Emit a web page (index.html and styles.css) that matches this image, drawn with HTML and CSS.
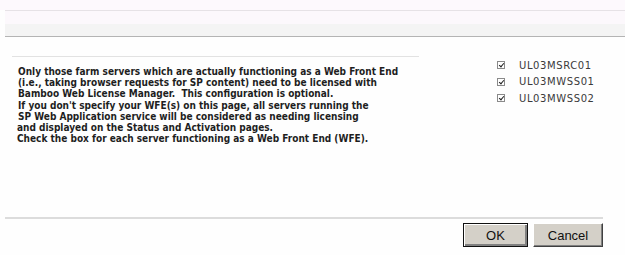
FILE: index.html
```html
<!DOCTYPE html>
<html lang="en">
<head>
    <meta charset="UTF-8">
    <title>Web Front End Servers</title>
    <link rel="stylesheet" href="styles.css">
</head>
<body>
    <div class="top-strip"></div>
    <div class="page">
        <div class="title-band">
            <div class="title-light"></div>
            <div class="title-gray"></div>
        </div>

        <div class="content">
            <div class="description">
                <p>Only those farm servers which are actually functioning as a Web Front End</p>
                <p>(i.e., taking browser requests for SP content) need to be licensed with</p>
                <p>Bamboo Web License Manager.&nbsp; This configuration is optional.</p>
                <p>If you don't specify your WFE(s) on this page, all servers running the</p>
                <p>SP Web Application service will be considered as needing licensing</p>
                <p class="shift">and displayed on the Status and Activation pages.</p>
                <p class="shift">Check the box for each server functioning as a Web Front End (WFE).</p>
            </div>

            <ul class="server-list">
                <li><span class="check"></span>UL03MSRC01</li>
                <li><span class="check"></span>UL03MWSS01</li>
                <li><span class="check"></span>UL03MWSS02</li>
            </ul>
        </div>

        <div class="footer">
            <button class="btn btn-default">OK</button>
            <button class="btn">Cancel</button>
        </div>
    </div>
</body>
</html>
```

FILE: styles.css
```css
* {
    margin: 0;
    padding: 0;
    box-sizing: border-box;
}

body {
    background: #fefefe;
    font-family: "DejaVu Sans", Verdana, sans-serif;
    color: #1e1e1e;
}

.top-strip {
    height: 10px;
    background: #fdf9fd;
}

.page {
    margin-left: 5px;
}

.title-band {
    border-top: 1px solid #e6e2e6;
    border-bottom: 1px solid #b4b4b4;
}

.title-light {
    height: 13px;
    background: #fcf8fc;
}

.title-gray {
    height: 12px;
    background: #f4f4f4;
}

.content {
    display: flex;
    padding-top: 19px;
    height: 181px;
}

.description {
    width: 407px;
    margin-left: 7px;
    border-top: 1px solid #e2e2e2;
    padding-top: 9px;
    padding-left: 6px;
    font-family: "DejaVu Sans Condensed", "DejaVu Sans", sans-serif;
    font-size: 10px;
    font-weight: bold;
    line-height: 11.2px;
    white-space: nowrap;
}

.description .shift {
    margin-left: -1px;
}

.server-list {
    list-style: none;
    margin-left: 78px;
    padding-top: 1px;
    font-size: 10px;
    letter-spacing: 0.6px;
    color: #3a3a3a;
}

.server-list li {
    display: flex;
    align-items: center;
    height: 16.5px;
}

.check {
    width: 8px;
    height: 8px;
    margin-right: 14px;
    border: 1px solid #8a8a8a;
    background: #fff;
    position: relative;
}

.check::after {
    content: "";
    position: absolute;
    left: 2px;
    top: 0px;
    width: 2px;
    height: 4px;
    border-right: 1px solid #222;
    border-bottom: 1px solid #222;
    transform: rotate(40deg);
}

.footer {
    display: flex;
    justify-content: flex-end;
    gap: 5px;
    width: 598px;
    border-top: 2px solid #dcdcdc;
    padding-top: 4px;
    margin-top: -1px;
}

.btn {
    height: 24px;
    background: #d4d0c8;
    font-family: "Liberation Sans", Arial, sans-serif;
    font-size: 13px;
    color: #111;
    border: 1px solid;
    border-color: #fff #404040 #404040 #fff;
    box-shadow: inset -1px -1px 0 #808080;
    width: 70px;
}

.btn-default {
    width: 65px;
    border: 1px solid #111;
    box-shadow: inset 1px 1px 0 #fff, inset -2px -2px 0 #808080;
}
```
